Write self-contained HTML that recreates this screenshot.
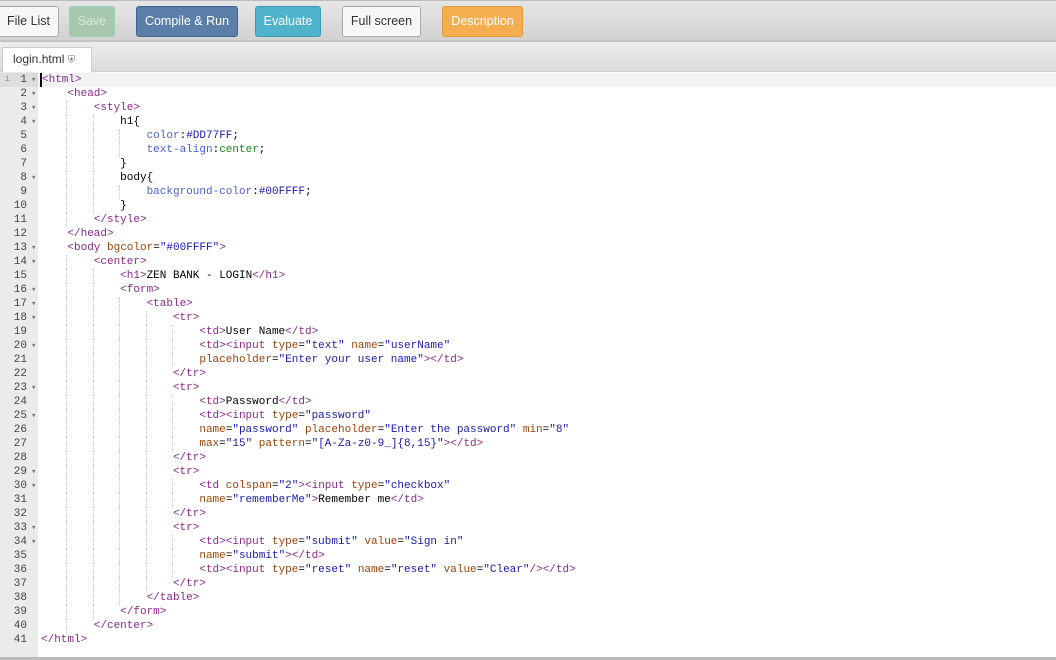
<!DOCTYPE html>
<html><head><style>
body{margin:0;width:1056px;height:660px;overflow:hidden;background:#fff;font-family:"Liberation Sans",sans-serif;position:relative}
.tb{position:absolute;left:0;top:0;width:1056px;height:42px;background:linear-gradient(#e6e6e6,#d2d2d2);border-top:1px solid #bbb;border-bottom:2px solid #c4c4c4;box-sizing:border-box}
.b{position:absolute;top:5px;height:31px;box-sizing:border-box;border:1px solid;border-radius:3px;font-size:12.5px;line-height:29px;text-align:center}
.tabs{position:absolute;left:0;top:42px;width:1056px;height:30px;background:linear-gradient(#ececec,#dcdcdc);border-bottom:1px solid #ccc;box-sizing:border-box}
.tab{position:absolute;left:2px;top:5px;width:90px;height:26px;background:#fff;border:1px solid #ccc;border-bottom:none;box-sizing:border-box;font-size:12px;color:#333;line-height:22px;padding-left:10px}
.gut{position:absolute;left:0;top:72px;width:38px;height:586px;background:#ebebeb}
.code{position:absolute;left:0;top:73px;width:1056px;font-family:"Liberation Mono",monospace;font-size:11px}
.l{height:14px;line-height:14px;position:relative;white-space:pre}
.n{position:absolute;left:0;width:27px;text-align:right;color:#444}
.f{position:absolute;left:31px;color:#777;font-size:9px}
.tx{position:absolute;left:41px;color:#000}
.i{display:inline-block;width:26.4px;height:14px;vertical-align:top}
.g{border-left:1px dotted #ccc;margin-left:-1px;width:26.4px}
.t{color:#8a2a8a}.a{color:#994409}.s{color:#1a1aa6}.p{color:#4b5fcf}.v{color:#1a1aa6}.c{color:#1b8a1b}
.hl{background:#f2f2f2}
.bot{position:absolute;left:0;top:657px;width:1056px;height:3px;background:#bbb}
</style></head><body>
<div class="tb">
<div class="b" style="left:-2px;width:61px;background:#f7f7f7;border-color:#aaa;color:#333">File List</div>
<div class="b" style="left:69px;width:46px;background:#a8c8ad;border-color:#9cb;color:#d8e8da">Save</div>
<div class="b" style="left:136px;width:102px;background:#5b7fa8;border-color:#41658e;color:#fff">Compile &amp; Run</div>
<div class="b" style="left:255px;width:66px;background:#4fb3cc;border-color:#3a9ab3;color:#fff">Evaluate</div>
<div class="b" style="left:342px;width:79px;background:#f7f7f7;border-color:#aaa;color:#333">Full screen</div>
<div class="b" style="left:442px;width:81px;background:#f4ad4f;border-color:#e09a3a;color:#fff">Description</div>
</div>
<div class="tabs"><div class="tab">login.html <span style="color:#777;font-size:10px">&#9960;</span></div></div>
<div class="gut"></div>
<div class="bot"></div>
<div class="code">
<div class="l hl" style="background:linear-gradient(90deg,#ddd 38px,#f2f2f2 38px)"><span style="position:absolute;left:5px;font-size:8px;color:#888">i</span><span class="n">1</span><span class="f">▾</span><span class="tx" style="border-left:2px solid #000;left:40px"><span class="t">&lt;html&gt;</span></span></div>
<div class="l"><span class="n">2</span><span class="f">▾</span><span class="tx"><i class="i"></i><span class="t">&lt;head&gt;</span></span></div>
<div class="l"><span class="n">3</span><span class="f">▾</span><span class="tx"><i class="i"></i><i class="i g"></i><span class="t">&lt;style&gt;</span></span></div>
<div class="l"><span class="n">4</span><span class="f">▾</span><span class="tx"><i class="i"></i><i class="i g"></i><i class="i g"></i>h1{</span></div>
<div class="l"><span class="n">5</span><span class="tx"><i class="i"></i><i class="i g"></i><i class="i g"></i><i class="i g"></i><span class="p">color</span>:<span class="v">#DD77FF</span>;</span></div>
<div class="l"><span class="n">6</span><span class="tx"><i class="i"></i><i class="i g"></i><i class="i g"></i><i class="i g"></i><span class="p">text-align</span>:<span class="c">center</span>;</span></div>
<div class="l"><span class="n">7</span><span class="tx"><i class="i"></i><i class="i g"></i><i class="i g"></i>}</span></div>
<div class="l"><span class="n">8</span><span class="f">▾</span><span class="tx"><i class="i"></i><i class="i g"></i><i class="i g"></i>body{</span></div>
<div class="l"><span class="n">9</span><span class="tx"><i class="i"></i><i class="i g"></i><i class="i g"></i><i class="i g"></i><span class="p">background-color</span>:<span class="v">#00FFFF</span>;</span></div>
<div class="l"><span class="n">10</span><span class="tx"><i class="i"></i><i class="i g"></i><i class="i g"></i>}</span></div>
<div class="l"><span class="n">11</span><span class="tx"><i class="i"></i><i class="i g"></i><span class="t">&lt;/style&gt;</span></span></div>
<div class="l"><span class="n">12</span><span class="tx"><i class="i"></i><span class="t">&lt;/head&gt;</span></span></div>
<div class="l"><span class="n">13</span><span class="f">▾</span><span class="tx"><i class="i"></i><span class="t">&lt;body </span><span class="a">bgcolor</span>=<span class="s">"#00FFFF"</span><span class="t">&gt;</span></span></div>
<div class="l"><span class="n">14</span><span class="f">▾</span><span class="tx"><i class="i"></i><i class="i g"></i><span class="t">&lt;center&gt;</span></span></div>
<div class="l"><span class="n">15</span><span class="tx"><i class="i"></i><i class="i g"></i><i class="i g"></i><span class="t">&lt;h1&gt;</span>ZEN BANK - LOGIN<span class="t">&lt;/h1&gt;</span></span></div>
<div class="l"><span class="n">16</span><span class="f">▾</span><span class="tx"><i class="i"></i><i class="i g"></i><i class="i g"></i><span class="t">&lt;form&gt;</span></span></div>
<div class="l"><span class="n">17</span><span class="f">▾</span><span class="tx"><i class="i"></i><i class="i g"></i><i class="i g"></i><i class="i g"></i><span class="t">&lt;table&gt;</span></span></div>
<div class="l"><span class="n">18</span><span class="f">▾</span><span class="tx"><i class="i"></i><i class="i g"></i><i class="i g"></i><i class="i g"></i><i class="i g"></i><span class="t">&lt;tr&gt;</span></span></div>
<div class="l"><span class="n">19</span><span class="tx"><i class="i"></i><i class="i g"></i><i class="i g"></i><i class="i g"></i><i class="i g"></i><i class="i g"></i><span class="t">&lt;td&gt;</span>User Name<span class="t">&lt;/td&gt;</span></span></div>
<div class="l"><span class="n">20</span><span class="f">▾</span><span class="tx"><i class="i"></i><i class="i g"></i><i class="i g"></i><i class="i g"></i><i class="i g"></i><i class="i g"></i><span class="t">&lt;td&gt;&lt;input </span><span class="a">type</span>=<span class="s">"text"</span> <span class="a">name</span>=<span class="s">"userName"</span></span></div>
<div class="l"><span class="n">21</span><span class="tx"><i class="i"></i><i class="i g"></i><i class="i g"></i><i class="i g"></i><i class="i g"></i><i class="i g"></i><span class="a">placeholder</span>=<span class="s">"Enter your user name"</span><span class="t">&gt;&lt;/td&gt;</span></span></div>
<div class="l"><span class="n">22</span><span class="tx"><i class="i"></i><i class="i g"></i><i class="i g"></i><i class="i g"></i><i class="i g"></i><span class="t">&lt;/tr&gt;</span></span></div>
<div class="l"><span class="n">23</span><span class="f">▾</span><span class="tx"><i class="i"></i><i class="i g"></i><i class="i g"></i><i class="i g"></i><i class="i g"></i><span class="t">&lt;tr&gt;</span></span></div>
<div class="l"><span class="n">24</span><span class="tx"><i class="i"></i><i class="i g"></i><i class="i g"></i><i class="i g"></i><i class="i g"></i><i class="i g"></i><span class="t">&lt;td&gt;</span>Password<span class="t">&lt;/td&gt;</span></span></div>
<div class="l"><span class="n">25</span><span class="f">▾</span><span class="tx"><i class="i"></i><i class="i g"></i><i class="i g"></i><i class="i g"></i><i class="i g"></i><i class="i g"></i><span class="t">&lt;td&gt;&lt;input </span><span class="a">type</span>=<span class="s">"password"</span></span></div>
<div class="l"><span class="n">26</span><span class="tx"><i class="i"></i><i class="i g"></i><i class="i g"></i><i class="i g"></i><i class="i g"></i><i class="i g"></i><span class="a">name</span>=<span class="s">"password"</span> <span class="a">placeholder</span>=<span class="s">"Enter the password"</span> <span class="a">min</span>=<span class="s">"8"</span></span></div>
<div class="l"><span class="n">27</span><span class="tx"><i class="i"></i><i class="i g"></i><i class="i g"></i><i class="i g"></i><i class="i g"></i><i class="i g"></i><span class="a">max</span>=<span class="s">"15"</span> <span class="a">pattern</span>=<span class="s">"[A-Za-z0-9_]{8,15}"</span><span class="t">&gt;&lt;/td&gt;</span></span></div>
<div class="l"><span class="n">28</span><span class="tx"><i class="i"></i><i class="i g"></i><i class="i g"></i><i class="i g"></i><i class="i g"></i><span class="t">&lt;/tr&gt;</span></span></div>
<div class="l"><span class="n">29</span><span class="f">▾</span><span class="tx"><i class="i"></i><i class="i g"></i><i class="i g"></i><i class="i g"></i><i class="i g"></i><span class="t">&lt;tr&gt;</span></span></div>
<div class="l"><span class="n">30</span><span class="f">▾</span><span class="tx"><i class="i"></i><i class="i g"></i><i class="i g"></i><i class="i g"></i><i class="i g"></i><i class="i g"></i><span class="t">&lt;td </span><span class="a">colspan</span>=<span class="s">"2"</span><span class="t">&gt;&lt;input </span><span class="a">type</span>=<span class="s">"checkbox"</span></span></div>
<div class="l"><span class="n">31</span><span class="tx"><i class="i"></i><i class="i g"></i><i class="i g"></i><i class="i g"></i><i class="i g"></i><i class="i g"></i><span class="a">name</span>=<span class="s">"rememberMe"</span><span class="t">&gt;</span>Remember me<span class="t">&lt;/td&gt;</span></span></div>
<div class="l"><span class="n">32</span><span class="tx"><i class="i"></i><i class="i g"></i><i class="i g"></i><i class="i g"></i><i class="i g"></i><span class="t">&lt;/tr&gt;</span></span></div>
<div class="l"><span class="n">33</span><span class="f">▾</span><span class="tx"><i class="i"></i><i class="i g"></i><i class="i g"></i><i class="i g"></i><i class="i g"></i><span class="t">&lt;tr&gt;</span></span></div>
<div class="l"><span class="n">34</span><span class="f">▾</span><span class="tx"><i class="i"></i><i class="i g"></i><i class="i g"></i><i class="i g"></i><i class="i g"></i><i class="i g"></i><span class="t">&lt;td&gt;&lt;input </span><span class="a">type</span>=<span class="s">"submit"</span> <span class="a">value</span>=<span class="s">"Sign in"</span></span></div>
<div class="l"><span class="n">35</span><span class="tx"><i class="i"></i><i class="i g"></i><i class="i g"></i><i class="i g"></i><i class="i g"></i><i class="i g"></i><span class="a">name</span>=<span class="s">"submit"</span><span class="t">&gt;&lt;/td&gt;</span></span></div>
<div class="l"><span class="n">36</span><span class="tx"><i class="i"></i><i class="i g"></i><i class="i g"></i><i class="i g"></i><i class="i g"></i><i class="i g"></i><span class="t">&lt;td&gt;&lt;input </span><span class="a">type</span>=<span class="s">"reset"</span> <span class="a">name</span>=<span class="s">"reset"</span> <span class="a">value</span>=<span class="s">"Clear"</span><span class="t">/&gt;&lt;/td&gt;</span></span></div>
<div class="l"><span class="n">37</span><span class="tx"><i class="i"></i><i class="i g"></i><i class="i g"></i><i class="i g"></i><i class="i g"></i><span class="t">&lt;/tr&gt;</span></span></div>
<div class="l"><span class="n">38</span><span class="tx"><i class="i"></i><i class="i g"></i><i class="i g"></i><i class="i g"></i><span class="t">&lt;/table&gt;</span></span></div>
<div class="l"><span class="n">39</span><span class="tx"><i class="i"></i><i class="i g"></i><i class="i g"></i><span class="t">&lt;/form&gt;</span></span></div>
<div class="l"><span class="n">40</span><span class="tx"><i class="i"></i><i class="i g"></i><span class="t">&lt;/center&gt;</span></span></div>
<div class="l"><span class="n">41</span><span class="tx"><span class="t">&lt;/html&gt;</span></span></div>
</div>
</body></html>
